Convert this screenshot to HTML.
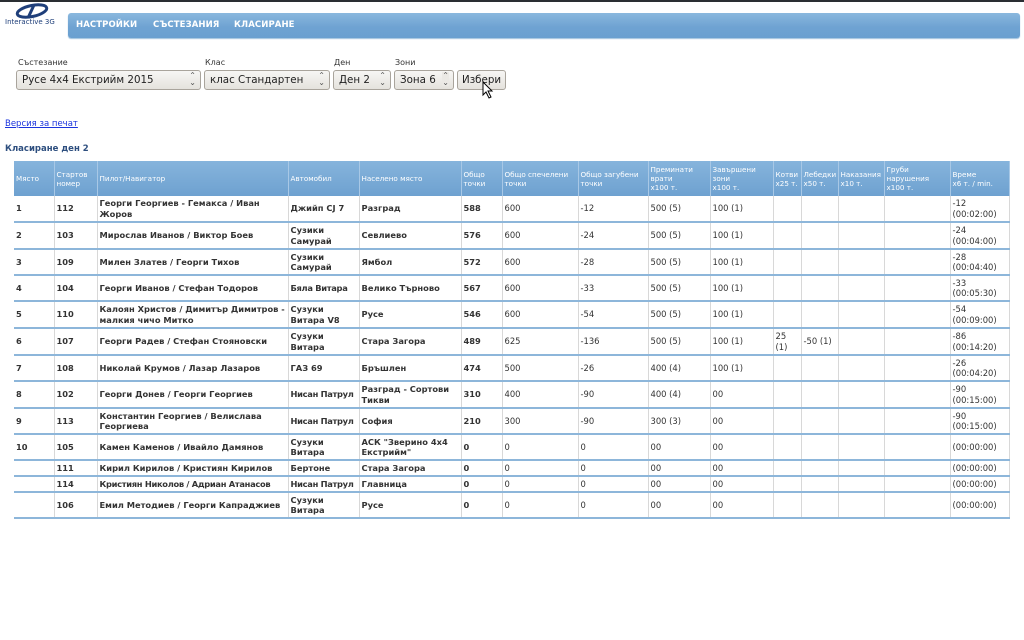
<!DOCTYPE html>
<html><head><meta charset="utf-8">
<style>
*{margin:0;padding:0;box-sizing:border-box}
body{width:1024px;height:640px;background:#fff;font-family:"DejaVu Sans","Liberation Sans",sans-serif;position:relative;overflow:hidden}
.topline{position:absolute;left:0;top:0;width:1024px;height:2px;background:#2a2e33}
.nav{position:absolute;left:68px;top:13px;width:952px;height:25px;border-radius:3px;background:linear-gradient(#8ab8de,#6fa3d2 55%,#6aa0d0);box-shadow:0 1px 1px #9bbfdc}
.nav span{position:absolute;top:7px;color:#fff;font-weight:bold;font-size:8.5px;letter-spacing:.1px}
.lbl{position:absolute;top:58px;font-size:8px;color:#333}
.sel{position:absolute;top:70px;height:20px;border:1px solid #a9a49c;border-radius:3px;background:linear-gradient(#f7f6f4,#e5e2dd);font-size:10.3px;color:#222;padding:3px 0 0 5px;white-space:nowrap;overflow:hidden}
.sel i{position:absolute;right:4px;top:1px;font-style:normal;font-size:8px;line-height:7px;color:#555;text-align:center}
a{position:absolute;left:5px;top:119px;font-size:8.5px;color:#1a33dd;text-decoration:underline}
h3{position:absolute;left:5px;top:144px;font-size:8.5px;color:#2e4f7f}
table{position:absolute;left:14px;top:161px;border-collapse:collapse;table-layout:fixed;width:995px;font-size:8.4px;color:#333}
th{background:linear-gradient(#86b4dc,#6ea1d0);color:#fff;font-weight:normal;font-size:7.2px;text-align:left;vertical-align:middle;padding:0 2px;height:35px;line-height:9px;border-right:1px solid #a8c8e6}
td{padding:0 2px;border-bottom:2px solid #8db6da;border-right:1px solid #d8d8d8;vertical-align:middle;line-height:10.5px}
td.b{font-weight:bold;color:#333;font-size:8.3px}
td.n{white-space:nowrap;letter-spacing:-.3px;overflow:hidden}
</style></head><body>
<div class="topline"></div>
<svg style="position:absolute;left:14px;top:3px" width="36" height="16" viewBox="0 0 36 16"><ellipse cx="18" cy="8" rx="15" ry="5.5" fill="none" stroke="#1f3f7a" stroke-width="3" transform="rotate(-12 18 8)"/><path d="M20 2 L14 15" stroke="#1f3f7a" stroke-width="3"/></svg>
<div style="position:absolute;left:5px;top:18px;font-size:7px;color:#1f3f7a">Interactive 3G</div>
<div class="nav"><span style="left:8px">НАСТРОЙКИ</span><span style="left:85px">СЪСТЕЗАНИЯ</span><span style="left:166px">КЛАСИРАНЕ</span></div>
<div class="lbl" style="left:18px">Състезание</div>
<div class="lbl" style="left:205px">Клас</div>
<div class="lbl" style="left:334px">Ден</div>
<div class="lbl" style="left:395px">Зони</div>
<div class="sel" style="left:16px;width:185px">Русе 4х4 Екстрийм 2015<i>⌃<br>⌄</i></div>
<div class="sel" style="left:204px;width:126px">клас Стандартен<i>⌃<br>⌄</i></div>
<div class="sel" style="left:333px;width:58px">Ден 2<i>⌃<br>⌄</i></div>
<div class="sel" style="left:394px;width:60px">Зона 6<i style="background:#ebe9e5">⌃<br>⌄</i></div>
<div class="sel" style="left:457px;width:49px;padding-left:4px">Избери</div>
<svg style="position:absolute;left:482px;top:81px" width="12" height="18" viewBox="0 0 12 18"><path d="M1 1 L1 14 L4 11 L7 17 L9 16 L6 10 L10 10 Z" fill="#fff" stroke="#000" stroke-width="1"/></svg>
<a>Версия за печат</a>
<h3>Класиране ден 2</h3>
<table>
<colgroup><col style="width:40px"><col style="width:43px"><col style="width:191px"><col style="width:71px"><col style="width:102px"><col style="width:41px"><col style="width:76px"><col style="width:70px"><col style="width:62px"><col style="width:63px"><col style="width:28px"><col style="width:37px"><col style="width:46px"><col style="width:66px"><col style="width:59px"></colgroup>
<tr><th>Място</th><th>Стартов номер</th><th>Пилот/Навигатор</th><th>Автомобил</th><th>Населено място</th><th>Общо точки</th><th>Общо спечелени точки</th><th>Общо загубени точки</th><th>Преминати врати<br>x100 т.</th><th>Завършени зони<br>x100 т.</th><th>Котви x25 т.</th><th>Лебедки x50 т.</th><th>Наказания x10 т.</th><th>Груби нарушения x100 т.</th><th>Време<br>x6 т. / min.</th></tr>
<tr style="height:26px"><td class="b">1</td><td class="b">112</td><td class="b">Георги Георгиев - Гемакса / Иван Жоров</td><td class="b">Джийп CJ 7</td><td class="b">Разград</td><td class="b">588</td><td>600</td><td>-12</td><td>500 (5)</td><td>100 (1)</td><td></td><td></td><td></td><td></td><td>-12<br>(00:02:00)</td></tr>
<tr style="height:27px"><td class="b">2</td><td class="b">103</td><td class="b">Мирослав Иванов / Виктор Боев</td><td class="b">Сузики Самурай</td><td class="b">Севлиево</td><td class="b">576</td><td>600</td><td>-24</td><td>500 (5)</td><td>100 (1)</td><td></td><td></td><td></td><td></td><td>-24<br>(00:04:00)</td></tr>
<tr style="height:26px"><td class="b">3</td><td class="b">109</td><td class="b">Милен Златев / Георги Тихов</td><td class="b">Сузики Самурай</td><td class="b">Ямбол</td><td class="b">572</td><td>600</td><td>-28</td><td>500 (5)</td><td>100 (1)</td><td></td><td></td><td></td><td></td><td>-28<br>(00:04:40)</td></tr>
<tr style="height:26px"><td class="b">4</td><td class="b">104</td><td class="b">Георги Иванов / Стефан Тодоров</td><td class="b n">Бяла Витара</td><td class="b">Велико Търново</td><td class="b">567</td><td>600</td><td>-33</td><td>500 (5)</td><td>100 (1)</td><td></td><td></td><td></td><td></td><td>-33<br>(00:05:30)</td></tr>
<tr style="height:27px"><td class="b">5</td><td class="b">110</td><td class="b">Калоян Христов / Димитър Димитров - малкия чичо Митко</td><td class="b">Сузуки Витара V8</td><td class="b">Русе</td><td class="b">546</td><td>600</td><td>-54</td><td>500 (5)</td><td>100 (1)</td><td></td><td></td><td></td><td></td><td>-54<br>(00:09:00)</td></tr>
<tr style="height:27px"><td class="b">6</td><td class="b">107</td><td class="b">Георги Радев / Стефан Стояновски</td><td class="b">Сузуки Витара</td><td class="b">Стара Загора</td><td class="b">489</td><td>625</td><td>-136</td><td>500 (5)</td><td>100 (1)</td><td>25 (1)</td><td>-50 (1)</td><td></td><td></td><td>-86<br>(00:14:20)</td></tr>
<tr style="height:26px"><td class="b">7</td><td class="b">108</td><td class="b">Николай Крумов / Лазар Лазаров</td><td class="b">ГАЗ 69</td><td class="b">Бръшлен</td><td class="b">474</td><td>500</td><td>-26</td><td>400 (4)</td><td>100 (1)</td><td></td><td></td><td></td><td></td><td>-26<br>(00:04:20)</td></tr>
<tr style="height:27px"><td class="b">8</td><td class="b">102</td><td class="b">Георги Донев / Георги Георгиев</td><td class="b n">Нисан Патрул</td><td class="b">Разград - Сортови Тикви</td><td class="b">310</td><td>400</td><td>-90</td><td>400 (4)</td><td>00</td><td></td><td></td><td></td><td></td><td>-90<br>(00:15:00)</td></tr>
<tr style="height:26px"><td class="b">9</td><td class="b">113</td><td class="b">Константин Георгиев / Велислава Георгиева</td><td class="b n">Нисан Патрул</td><td class="b">София</td><td class="b">210</td><td>300</td><td>-90</td><td>300 (3)</td><td>00</td><td></td><td></td><td></td><td></td><td>-90<br>(00:15:00)</td></tr>
<tr style="height:26px"><td class="b">10</td><td class="b">105</td><td class="b">Камен Каменов / Ивайло Дамянов</td><td class="b">Сузуки Витара</td><td class="b">АСК "Зверино 4x4 Екстрийм"</td><td class="b">0</td><td>0</td><td>0</td><td>00</td><td>00</td><td></td><td></td><td></td><td></td><td>(00:00:00)</td></tr>
<tr style="height:16px"><td class="b"></td><td class="b">111</td><td class="b">Кирил Кирилов / Кристиян Кирилов</td><td class="b">Бертоне</td><td class="b">Стара Загора</td><td class="b">0</td><td>0</td><td>0</td><td>00</td><td>00</td><td></td><td></td><td></td><td></td><td>(00:00:00)</td></tr>
<tr style="height:16px"><td class="b"></td><td class="b">114</td><td class="b n">Кристиян Николов / Адриан Атанасов</td><td class="b n">Нисан Патрул</td><td class="b">Главница</td><td class="b">0</td><td>0</td><td>0</td><td>00</td><td>00</td><td></td><td></td><td></td><td></td><td>(00:00:00)</td></tr>
<tr style="height:26px"><td class="b"></td><td class="b">106</td><td class="b">Емил Методиев / Георги Капраджиев</td><td class="b">Сузуки Витара</td><td class="b">Русе</td><td class="b">0</td><td>0</td><td>0</td><td>00</td><td>00</td><td></td><td></td><td></td><td></td><td>(00:00:00)</td></tr>
</table>
</body></html>
